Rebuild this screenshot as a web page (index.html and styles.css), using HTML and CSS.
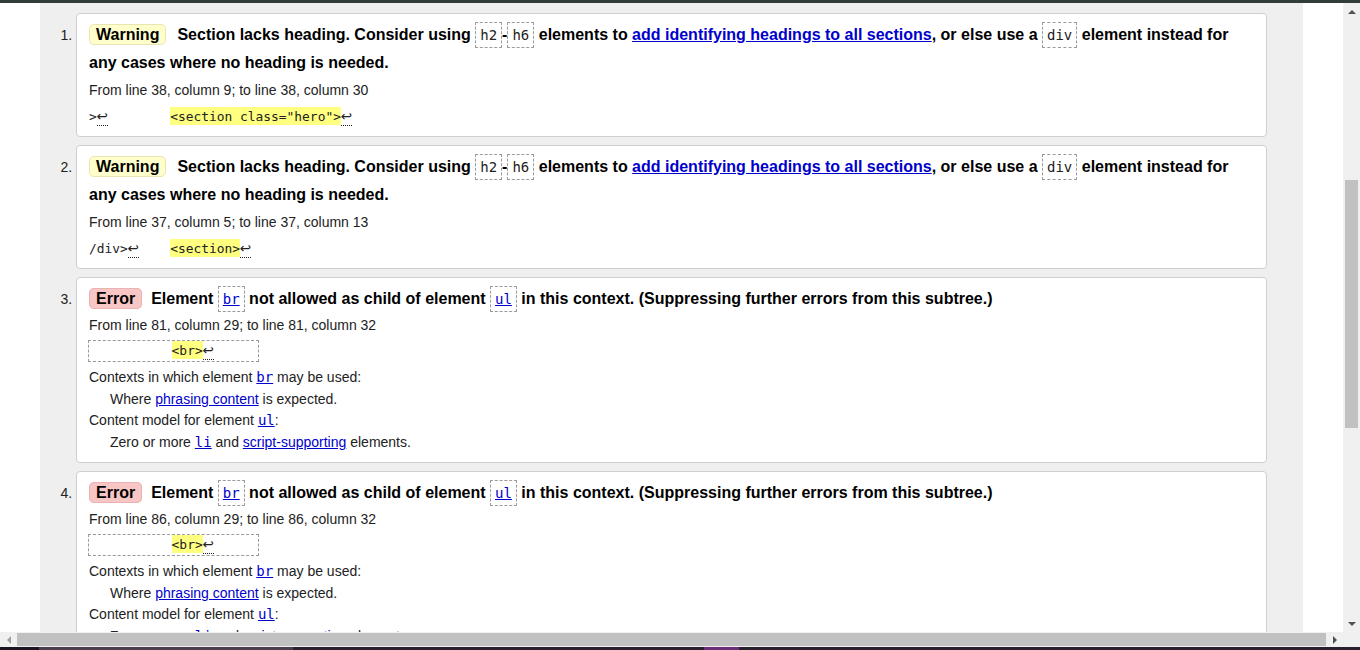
FILE: index.html
```html
<!DOCTYPE html>
<html lang="en">
<head>
<meta charset="utf-8">
<title>Validator results</title>
<link rel="stylesheet" href="styles.css">
</head>
<body>
<div class="window">
  <div class="topbar"></div>
  <div class="main">
    <div class="viewport">
      <div class="page">
        <ol class="results">
          <li class="msg warning">
            <p class="message"><strong class="badge">Warning</strong><span>Section lacks heading. Consider using <code class="tag">h2</code>-<code class="tag">h6</code> elements to <a href="#">add identifying headings to all sections</a>, or else use a <code class="tag">div</code> element instead for any cases where no heading is needed.</span></p>
            <p class="location">From line 38, column 9; to line 38, column 30</p>
            <p class="extract"><code>&gt;<span class="lf">↩</span>        <b class="hl">&lt;section class="hero"&gt;</b><span class="lf">↩</span></code></p>
          </li>
          <li class="msg warning">
            <p class="message"><strong class="badge">Warning</strong><span>Section lacks heading. Consider using <code class="tag">h2</code>-<code class="tag">h6</code> elements to <a href="#">add identifying headings to all sections</a>, or else use a <code class="tag">div</code> element instead for any cases where no heading is needed.</span></p>
            <p class="location">From line 37, column 5; to line 37, column 13</p>
            <p class="extract"><code>/div&gt;<span class="lf">↩</span>    <b class="hl">&lt;section&gt;</b><span class="lf">↩</span></code></p>
          </li>
          <li class="msg error">
            <p class="message"><strong class="badge">Error</strong><span>Element <a class="tag" href="#">br</a> not allowed as child of element <a class="tag" href="#">ul</a> in this context. (Suppressing further errors from this subtree.)</span></p>
            <p class="location">From line 81, column 29; to line 81, column 32</p>
            <p class="extract"><code class="boxed">          <b class="hl">&lt;br&gt;</b><span class="lf">↩</span>     </code></p>
            <dl class="model">
              <dt>Contexts in which element <a class="mono" href="#">br</a> may be used:</dt>
              <dd>Where <a href="#">phrasing content</a> is expected.</dd>
              <dt>Content model for element <a class="mono" href="#">ul</a>:</dt>
              <dd>Zero or more <a class="mono" href="#">li</a> and <a href="#">script-supporting</a> elements.</dd>
            </dl>
          </li>
          <li class="msg error">
            <p class="message"><strong class="badge">Error</strong><span>Element <a class="tag" href="#">br</a> not allowed as child of element <a class="tag" href="#">ul</a> in this context. (Suppressing further errors from this subtree.)</span></p>
            <p class="location">From line 86, column 29; to line 86, column 32</p>
            <p class="extract"><code class="boxed">          <b class="hl">&lt;br&gt;</b><span class="lf">↩</span>     </code></p>
            <dl class="model">
              <dt>Contexts in which element <a class="mono" href="#">br</a> may be used:</dt>
              <dd>Where <a href="#">phrasing content</a> is expected.</dd>
              <dt>Content model for element <a class="mono" href="#">ul</a>:</dt>
              <dd>Zero or more <a class="mono" href="#">li</a> and <a href="#">script-supporting</a> elements.</dd>
            </dl>
          </li>
        </ol>
      </div>
    </div>
    <div class="vscroll">
      <div class="sbtn"><span class="tri up"></span></div>
      <div class="vtrack"><div class="vthumb" style="margin-top:160px;height:248px"></div></div>
      <div class="sbtn"><span class="tri down"></span></div>
    </div>
  </div>
  <div class="hscroll">
    <div class="hbtn"><span class="tri left"></span></div>
    <div class="htrack"><div class="hthumb"></div></div>
    <div class="hbtn"><span class="tri right"></span></div>
    <div class="corner"></div>
  </div>
  <div class="taskbar">
    <span class="seg dark"></span>
    <span class="seg lite"></span>
    <span class="seg mid"></span>
    <span class="seg purple"></span>
    <span class="seg rest"></span>
  </div>
</div>
</body>
</html>
```
FILE: styles.css
```css
html, body {
  margin: 0;
  padding: 0;
  overflow: hidden;
}
body {
  font-family: "Liberation Sans", Arial, sans-serif;
  color: #222;
  background: #fff;
}
.window {
  width: 1360px;
  height: 650px;
  display: flex;
  flex-direction: column;
}
.topbar {
  height: 3px;
  background: #323c38;
  flex: none;
}
.main {
  height: 629px;
  display: flex;
  flex: none;
}
.viewport {
  width: 1343px;
  flex: none;
  background: #fff;
  padding: 0 40px;
  box-sizing: border-box;
  overflow: hidden;
}
.page {
  background: #efefef;
  height: 100%;
  padding: 10px 36px 0;
  box-sizing: border-box;
}
.results {
  margin: 0;
  padding: 0;
  list-style: decimal outside;
}
.msg {
  font-size: 14px;
  color: #222;
  background: #fff;
  border: 1px solid #cfcfcf;
  border-radius: 4px;
  padding: 7px 12px 9px;
  margin-bottom: 8px;
}
.msg.error {
  padding-top: 8px;
}
.msg p { margin: 0; }
.message {
  font-size: 16px;
  font-weight: bold;
  line-height: 28px;
  color: #000;
}
.error .message {
  line-height: 26px;
}
.badge {
  padding: 1px 6px;
  border-radius: 5px;
  margin-right: 11px;
}
.warning .badge {
  background: #ffffcc;
  border: 1px solid #e9e6b4;
}
.error .badge {
  background: #f9c6c6;
  border: 1px solid #eab3b3;
  margin-right: 9px;
}
a {
  color: #0000cc;
  text-decoration: underline;
}
.tag {
  font-family: "DejaVu Sans Mono", "Liberation Mono", monospace;
  font-weight: normal;
  font-size: 14px;
  line-height: 1;
  border: 1px dashed #9a9a9a;
  padding: 4px 4px;
}
code.tag { color: #222; }
.location {
  margin-top: 3px !important;
  line-height: 21px;
}
.extract {
  margin-top: 5px !important;
  line-height: 20px;
}
.error .extract {
  margin-top: 4px !important;
}
.extract code {
  font-family: "DejaVu Sans Mono", "Liberation Mono", monospace;
  font-size: 12.9px;
  white-space: pre;
  color: #222;
}
.extract code.boxed {
  display: inline-block;
  vertical-align: top;
  line-height: 20px;
  border: 1px dashed #9a9a9a;
  padding: 0 5px;
  margin-left: -1px;
}
.hl {
  font-weight: normal;
  background: #ffff80;
  padding: 2px 0 1px;
}
.lf {
  font-family: "DejaVu Sans", sans-serif;
  font-size: 13.5px;
  line-height: 1;
  border-bottom: 1px dotted #222;
  padding-bottom: 1px;
}
.model {
  margin: 5px 0 0;
  line-height: 21px;
}
.model dt { margin: 0; }
.model dd {
  margin: 1px 0 0 21px;
}
.mono {
  font-family: "DejaVu Sans Mono", "Liberation Mono", monospace;
  font-size: 14px;
  line-height: 1;
}

/* scrollbars */
.vscroll {
  width: 17px;
  flex: none;
  background: #f0f0f0;
  display: flex;
  flex-direction: column;
}
.sbtn {
  height: 17px;
  flex: none;
  display: flex;
  align-items: center;
  justify-content: center;
}
.vtrack {
  flex: 1;
  display: flex;
  flex-direction: column;
  align-items: center;
}
.vthumb {
  width: 13px;
  background: #c1c1c1;
}
.hscroll {
  height: 15px;
  flex: none;
  display: flex;
  background: #f0f0f0;
}
.hbtn {
  width: 17px;
  flex: none;
  display: flex;
  align-items: center;
  justify-content: center;
}
.htrack {
  flex: 1;
  display: flex;
  align-items: center;
}
.hthumb {
  height: 13px;
  width: 100%;
  background: #c1c1c1;
}
.corner {
  width: 17px;
  flex: none;
  background: #f0f0f0;
}
.tri {
  width: 0;
  height: 0;
  display: block;
}
.tri.up {
  border-left: 4px solid transparent;
  border-right: 4px solid transparent;
  border-bottom: 4px solid #505050;
}
.tri.down {
  border-left: 4px solid transparent;
  border-right: 4px solid transparent;
  border-top: 4px solid #505050;
}
.tri.left {
  border-top: 4px solid transparent;
  border-bottom: 4px solid transparent;
  border-right: 4px solid #a0a0a0;
}
.tri.right {
  border-top: 4px solid transparent;
  border-bottom: 4px solid transparent;
  border-left: 4px solid #505050;
}
.taskbar {
  height: 3px;
  flex: none;
  display: flex;
  background: #2a1f2c;
}
.seg { display: block; height: 100%; }
.seg.dark { width: 39px; background: #1c1420; }
.seg.lite { width: 254px; background: #4a3d50; }
.seg.mid { width: 411px; background: #2a1f2c; }
.seg.purple { width: 35px; background: #6b2f7a; }
.seg.rest { flex: 1; background: #2a1f2c; }
```
